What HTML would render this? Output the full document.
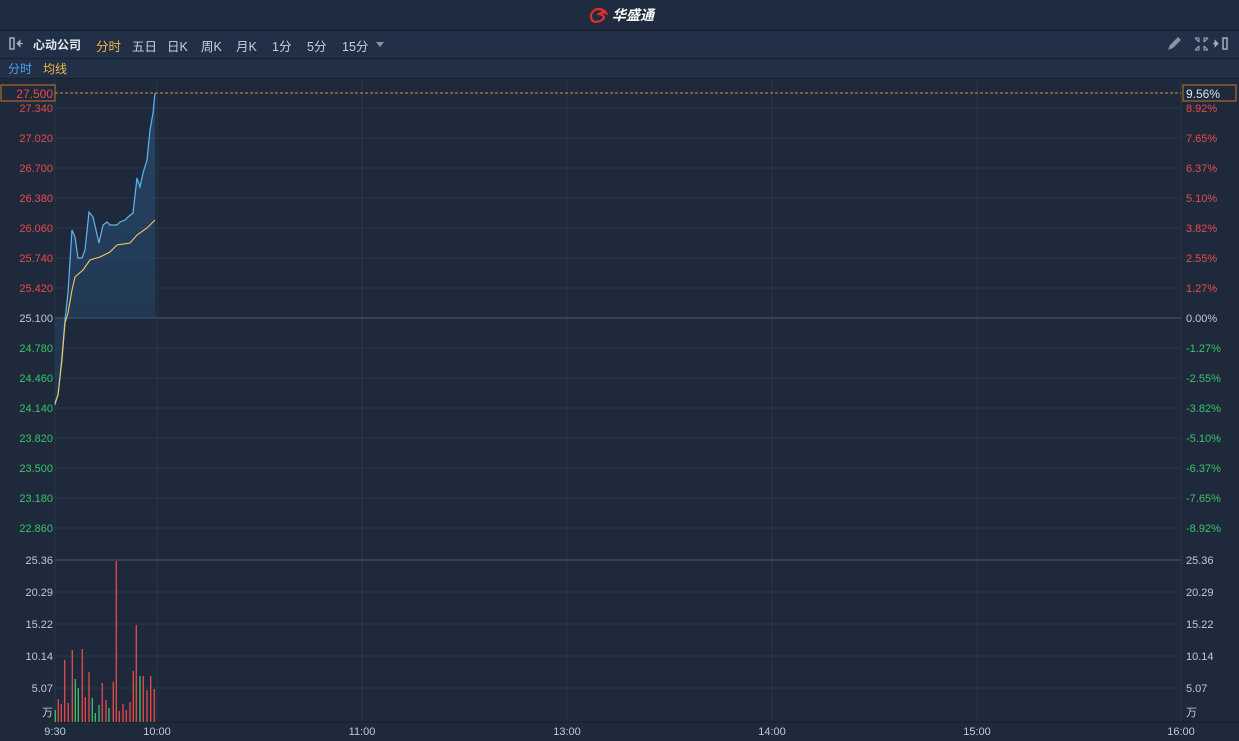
<!DOCTYPE html>
<html><head><meta charset="utf-8"><style>
body{margin:0;width:1239px;height:741px;overflow:hidden;background:#1e2a3b;font-family:"Liberation Sans","Noto Sans CJK SC",sans-serif;}
.top{position:absolute;left:0;top:0;width:1239px;height:30px;background:#1f2b3e;border-bottom:1px solid #141c28;}
.tb{position:absolute;left:0;top:31px;width:1239px;height:27px;background:#223047;border-bottom:1px solid #18212e;font-size:12.5px;color:#c8d0dc;}
.tb span{position:absolute;top:5px}
.sb{position:absolute;left:0;top:59px;width:1239px;height:19px;background:#223047;border-bottom:1px solid #18212e;font-size:12px;}
svg{position:absolute;left:0;top:0}
</style></head><body>
<div class="top"><svg width="80" height="30" style="left:588px"><path d="M4 20c-3-5 1-11 7-11 3 0 6 2 7 4-2-1-5-1-7 1 3 0 5 2 5 4-3 4-10 5-12 2z" fill="none" stroke="#e0302a" stroke-width="2.2"/><text x="24" y="20" fill="#fff" font-size="14" font-weight="bold" font-style="italic" font-family="Noto Sans CJK SC,sans-serif">华盛通</text></svg></div>
<div class="tb">
<svg width="30" height="27"><rect x="10" y="7" width="4" height="11" fill="none" stroke="#aab" stroke-width="1.5"/><path d="M17 12.5h6M17 12.5l3-3v6z" stroke="#aab" fill="#aab"/></svg>
<span style="left:33px;font-weight:bold;color:#e0e6ee;font-size:12px">心动公司</span>
<span style="left:96px;color:#f0b849">分时</span><span style="left:132px">五日</span><span style="left:167px">日K</span><span style="left:201px">周K</span><span style="left:236px">月K</span><span style="left:272px">1分</span><span style="left:307px">5分</span><span style="left:342px">15分</span>
<svg width="20" height="27" style="left:372px"><path d="M4 11h8l-4 5z" fill="#8894a6"/></svg>
<svg width="80" height="27" style="left:1160px"><path d="M8 19l2-5 8-8 3 3-8 8z" fill="#8894a6"/><path d="M35 7h4v4M35 7l4 4M48 7h-4v4M48 7l-4 4M35 19h4v-4M35 19l4-4M48 19h-4v-4M48 19l-4-4" stroke="#8894a6" fill="none" stroke-width="1.3"/><path d="M53 12.5h5M58 12.5l-3-3v6z" stroke="#aab" fill="#aab"/><rect x="63" y="7" width="4" height="11" fill="none" stroke="#aab" stroke-width="1.5"/></svg>
</div>
<div class="sb"><span style="position:absolute;left:8px;top:1px;color:#4aa3e8">分时</span><span style="position:absolute;left:43px;top:1px;color:#f0b849">均线</span></div>
<svg width="1239" height="741" style="top:0">
<defs><linearGradient id="g" x1="0" y1="0" x2="0" y2="1"><stop offset="0" stop-color="#2a5078" stop-opacity=".7"/><stop offset="1" stop-color="#24456a" stop-opacity=".4"/></linearGradient></defs>
<g stroke="#28364a" stroke-width="1">
<path d="M55 108H1181M55 138H1181M55 168H1181M55 198H1181M55 228H1181M55 258H1181M55 288H1181M55 348H1181M55 378H1181M55 408H1181M55 438H1181M55 468H1181M55 498H1181M55 528H1181M55 592H1181M55 624H1181M55 656H1181M55 688H1181"/>
<path d="M157 79V722M362 79V722M567 79V722M772 79V722M977 79V722M1181 79V722M55 79V722"/>
</g>
<path d="M55 318H1181M55 560H1181" stroke="#4a5a72"/>
<path d="M55 722H1239" stroke="#141c28"/>
<path d="M55 93H1181" stroke="#e08a30" stroke-dasharray="3,2"/>
<path d="M55 405L58.3 393L61.7 360L65 320L68 293L72 230L75 237L78 258L82 258L85 250L89 212L93 217L99 243L103 225L107 222L110 225L117 225L120 222L125 220L128 217L133 213L137 178L140 187L143 173L147 160L150 130L153 113L155 93L155 318L55 318Z" fill="url(#g)"/>
<path d="M55 405L58.3 393L61.7 360L65 320L68 293L72 230L75 237L78 258L82 258L85 250L89 212L93 217L99 243L103 225L107 222L110 225L117 225L120 222L125 220L128 217L133 213L137 178L140 187L143 173L147 160L150 130L153 113L155 93" fill="none" stroke="#5fb5f0" stroke-width="1.2"/>
<path d="M55 403L58 395L62 360L65 323L68 313L72 290L75 277L83 270L90 260L100 257L110 252L117 245L130 243L137 235L147 228L155 220" fill="none" stroke="#f0c860" stroke-width="1.1"/>
<g stroke-width="1.3">
<path stroke="#e84a4a" d="M58.3 722V699M61.3 722V704M64.7 722V660M68.3 722V703M72.3 722V650M82.3 722V649M85.3 722V697M89 722V672M102.3 722V683M106 722V700M113.3 722V682M116.3 722V561M119.3 722V711M123 722V704M126.3 722V710M130 722V702M133.3 722V671M136.3 722V625M143.3 722V676M147 722V690M150.7 722V676M154.3 722V689"/>
<path stroke="#3ac26a" d="M55.3 722V710M75.3 722V679M78.3 722V688M92.3 722V698M95.3 722V713M99 722V705M109 722V708M140 722V676"/>
</g>
<g font-size="11" text-anchor="end">
<text x="53" y="112" fill="#e84a4a">27.340</text><text x="53" y="142" fill="#e84a4a">27.020</text><text x="53" y="172" fill="#e84a4a">26.700</text><text x="53" y="202" fill="#e84a4a">26.380</text><text x="53" y="232" fill="#e84a4a">26.060</text><text x="53" y="262" fill="#e84a4a">25.740</text><text x="53" y="292" fill="#e84a4a">25.420</text><text x="53" y="322" fill="#c0c8d4">25.100</text>
<text x="53" y="352" fill="#3ac26a">24.780</text><text x="53" y="382" fill="#3ac26a">24.460</text><text x="53" y="412" fill="#3ac26a">24.140</text><text x="53" y="442" fill="#3ac26a">23.820</text><text x="53" y="472" fill="#3ac26a">23.500</text><text x="53" y="502" fill="#3ac26a">23.180</text><text x="53" y="532" fill="#3ac26a">22.860</text>
<g fill="#c0c8d4"><text x="53" y="564">25.36</text><text x="53" y="596">20.29</text><text x="53" y="628">15.22</text><text x="53" y="660">10.14</text><text x="53" y="692">5.07</text><text x="53" y="716">万</text></g>
</g>
<g font-size="11">
<text x="1186" y="112" fill="#e84a4a">8.92%</text><text x="1186" y="142" fill="#e84a4a">7.65%</text><text x="1186" y="172" fill="#e84a4a">6.37%</text><text x="1186" y="202" fill="#e84a4a">5.10%</text><text x="1186" y="232" fill="#e84a4a">3.82%</text><text x="1186" y="262" fill="#e84a4a">2.55%</text><text x="1186" y="292" fill="#e84a4a">1.27%</text><text x="1186" y="322" fill="#c0c8d4">0.00%</text>
<text x="1186" y="352" fill="#3ac26a">-1.27%</text><text x="1186" y="382" fill="#3ac26a">-2.55%</text><text x="1186" y="412" fill="#3ac26a">-3.82%</text><text x="1186" y="442" fill="#3ac26a">-5.10%</text><text x="1186" y="472" fill="#3ac26a">-6.37%</text><text x="1186" y="502" fill="#3ac26a">-7.65%</text><text x="1186" y="532" fill="#3ac26a">-8.92%</text>
<g fill="#c0c8d4"><text x="1186" y="564">25.36</text><text x="1186" y="596">20.29</text><text x="1186" y="628">15.22</text><text x="1186" y="660">10.14</text><text x="1186" y="692">5.07</text><text x="1186" y="716">万</text></g>
</g>
<g font-size="11" fill="#c0c8d4" text-anchor="middle"><text x="55" y="735">9:30</text><text x="157" y="735">10:00</text><text x="362" y="735">11:00</text><text x="567" y="735">13:00</text><text x="772" y="735">14:00</text><text x="977" y="735">15:00</text><text x="1181" y="735">16:00</text></g>
<rect x="1" y="85" width="54" height="16" fill="#1e2a3b" stroke="#c0782a"/><text x="53" y="98" font-size="12" fill="#e84a4a" text-anchor="end">27.500</text>
<rect x="1183" y="85" width="53" height="16" fill="#1e2a3b" stroke="#c0782a"/><text x="1186" y="98" font-size="12" fill="#d8e0ea">9.56%</text>
</svg>
</body></html>
